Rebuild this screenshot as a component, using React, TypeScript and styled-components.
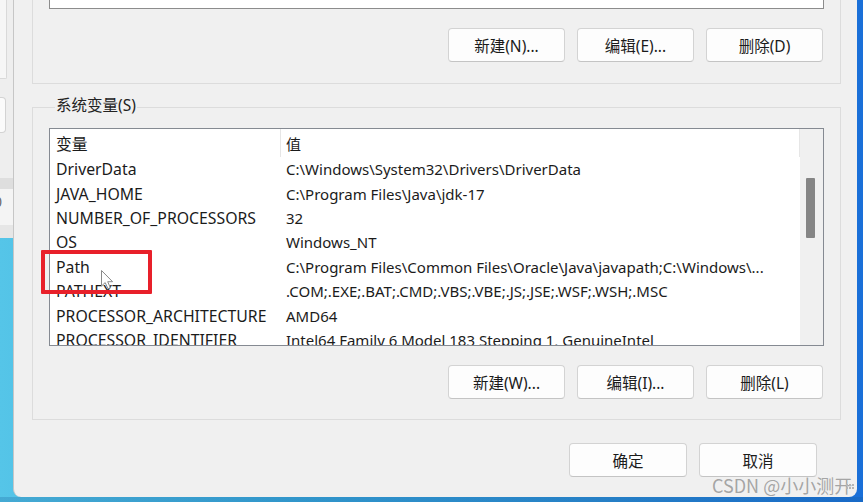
import React from 'react';
import styled, { createGlobalStyle } from 'styled-components';

/* ───────────── data ───────────── */

const systemVars: [string, string][] = [
  ['DriverData', 'C:\\Windows\\System32\\Drivers\\DriverData'],
  ['JAVA_HOME', 'C:\\Program Files\\Java\\jdk-17'],
  ['NUMBER_OF_PROCESSORS', '32'],
  ['OS', 'Windows_NT'],
  ['Path', 'C:\\Program Files\\Common Files\\Oracle\\Java\\javapath;C:\\Windows\\...'],
  ['PATHEXT', '.COM;.EXE;.BAT;.CMD;.VBS;.VBE;.JS;.JSE;.WSF;.WSH;.MSC'],
  ['PROCESSOR_ARCHITECTURE', 'AMD64'],
  ['PROCESSOR_IDENTIFIER', 'Intel64 Family 6 Model 183 Stepping 1, GenuineIntel'],
];

const GlobalStyle = createGlobalStyle`
  html, body { margin: 0; padding: 0; background: #1a6fd8; }
  body {
    font-family: 'Noto Sans', 'Noto Sans CJK SC', sans-serif;
    color: #1b1b1b;
  }
  * { box-sizing: border-box; }
`;

/* ───────────── component ───────────── */

const App: React.FC = () => (
  <>
    <GlobalStyle />
    <Desktop>
      {/* window peeking out behind the dialog */}
      <BehindPane>
        <BehindField />
        <BehindButton />
        <BehindBand />
        <BehindText>0</BehindText>
      </BehindPane>

      <Dialog>
        {/* user variables (scrolled off the top) */}
        <Group>
          <ListStub />
          <ButtonRow>
            <Button>新建(N)...</Button>
            <Button>编辑(E)...</Button>
            <Button>删除(D)</Button>
          </ButtonRow>
        </Group>

        {/* system variables */}
        <Group framed>
          <GroupTitle>系统变量(S)</GroupTitle>
          <ListBox>
            <Table>
              <HeaderRow>
                <NameCell header>变量</NameCell>
                <ValueCell>值</ValueCell>
              </HeaderRow>
              {systemVars.map(([name, value]) => (
                <Row key={name}>
                  <NameCell>{name}</NameCell>
                  <ValueCell>{value}</ValueCell>
                </Row>
              ))}
            </Table>
            <ScrollTrack>
              <ScrollThumb />
            </ScrollTrack>
          </ListBox>
          <ButtonRow>
            <Button>新建(W)...</Button>
            <Button>编辑(I)...</Button>
            <Button>删除(L)</Button>
          </ButtonRow>
        </Group>

        <Footer>
          <Button wide>确定</Button>
          <Button wide>取消</Button>
        </Footer>
      </Dialog>

      {/* annotations on top of the screenshot */}
      <Highlight />
      <Pointer width="16" height="22" viewBox="0 0 16 22">
        <path
          d="M1.5 1.5 L1.5 17 L5.2 13.6 L8 19.8 L10.4 18.8 L7.7 12.7 L12.6 12.7 Z"
          fill="rgba(255,255,255,0.75)"
          stroke="#8a8a8a"
          strokeWidth="1"
          strokeLinejoin="round"
        />
      </Pointer>
      <Watermark>CSDN @小小测开</Watermark>
      <Grip>
        {[0, 1, 2, 3, 4, 5].map((i) => (
          <GripDot key={i} />
        ))}
      </Grip>
    </Desktop>
  </>
);

export default App;

/* ───────────── styled components ───────────── */

const Desktop = styled.div`
  position: relative;
  width: 863px;
  height: 502px;
  overflow: hidden;
  display: flex;
  align-items: flex-start;
  background:
    linear-gradient(180deg, transparent 0 497px, rgba(20, 90, 150, 0.25) 497px),
    linear-gradient(90deg, #55c5e8 0%, #3aa9dc 35%, #2c8cd6 70%, #1a6fd8 100%);
`;

const BehindPane = styled.div`
  width: 13px;
  height: 238px;
  flex-shrink: 0;
  background: #eeeeee;
  display: flex;
  flex-direction: column;
`;

const BehindField = styled.div`
  width: 7px;
  height: 79px;
  background: #f6f6f6;
  border-right: 1px solid #d9d9d9;
  border-bottom: 1px solid #d9d9d9;
  border-bottom-right-radius: 2px;
`;

const BehindButton = styled.div`
  margin-top: 18px;
  width: 6px;
  height: 36px;
  background: #fbfbfb;
  border: 1px solid #d3d3d3;
  border-left: none;
  border-radius: 0 4px 4px 0;
`;

const BehindBand = styled.div`
  margin-top: 45px;
  height: 11px;
  background: #dedede;
`;

const BehindText = styled.div`
  flex: 1;
  margin-left: -6px;
  padding-top: 4px;
  font-size: 14px;
  line-height: 18px;
  color: #666;
  background: linear-gradient(180deg, #f4f4f4 0 36px, #e6e6e6 36px);
`;

const Dialog = styled.div`
  width: 844px;
  height: 497px;
  flex-shrink: 0;
  background: #f0f0f0;
  border-left: 1px solid #c6c6c6;
  border-radius: 0 0 8px 8px;
  padding: 0 16px 0 18px;
  display: flex;
  flex-direction: column;
`;

const Group = styled.div<{ framed?: boolean }>`
  display: flex;
  flex-direction: column;
  border: 1px solid #dcdcdc;
  border-top: ${({ framed }) => (framed ? '1px solid #dcdcdc' : 'none')};
  margin-top: ${({ framed }) => (framed ? '23px' : '0')};
  padding: 0 16px ${({ framed }) => (framed ? '20px' : '21px')} 16px;
`;

const GroupTitle = styled.div`
  align-self: flex-start;
  margin: -13px 0 0 6px;
  padding: 0 1px;
  background: #f0f0f0;
  font-size: 15.5px;
  line-height: 20px;
  color: #222;
`;

const ListStub = styled.div`
  height: 9px;
  background: #ffffff;
  border: 1px solid #8c8c8c;
  border-top: none;
`;

const ListBox = styled.div`
  margin-top: 13px;
  height: 218px;
  background: #ffffff;
  border: 1px solid #858a92;
  display: flex;
  overflow: hidden;
`;

const Table = styled.div`
  flex: 1;
  display: flex;
  flex-direction: column;
  font-size: 15px;
`;

const HeaderRow = styled.div`
  display: flex;
  flex-shrink: 0;
  height: 28px;
  align-items: center;
  border-right: 1px solid #e6e6e6;
`;

const Row = styled.div`
  display: flex;
  flex-shrink: 0;
  height: 24.4px;
  align-items: center;
  white-space: nowrap;
`;

const NameCell = styled.div<{ header?: boolean }>`
  width: 231px;
  flex-shrink: 0;
  padding-left: 6px;
  align-self: stretch;
  display: flex;
  align-items: center;
  font-size: 15.8px;
  border-right: ${({ header }) => (header ? '1px solid #e6e6e6' : '1px solid transparent')};
`;

const ValueCell = styled.div`
  flex: 1;
  padding-left: 5px;
  overflow: hidden;
`;

const ScrollTrack = styled.div`
  width: 23px;
  flex-shrink: 0;
  background: #f0f0f0;
  padding: 49px 0 0 6px;
`;

const ScrollThumb = styled.div`
  width: 9px;
  height: 60px;
  background: #858585;
  border-radius: 1px;
`;

const ButtonRow = styled.div`
  display: flex;
  justify-content: flex-end;
  gap: 12px;
  margin: 19px 1px 0 0;
`;

const Button = styled.button<{ wide?: boolean }>`
  width: ${({ wide }) => (wide ? '118px' : '117px')};
  height: 34px;
  background: #fdfdfd;
  border: 1px solid #d3d3d3;
  border-bottom-color: #c4c4c4;
  border-radius: 4px;
  font-family: inherit;
  font-size: 15.5px;
  color: #1b1b1b;
  padding: 0;
`;

const Footer = styled.div`
  display: flex;
  justify-content: flex-end;
  gap: 12px;
  margin: 23px 24px 0 0;
`;

const Highlight = styled.div`
  position: absolute;
  left: 41px;
  top: 250px;
  width: 111px;
  height: 44px;
  border: 4px solid #e8202a;
  border-radius: 1px;
`;

const Pointer = styled.svg`
  position: absolute;
  left: 100px;
  top: 269px;
`;

const Watermark = styled.div`
  position: absolute;
  left: 712px;
  top: 473px;
  font-family: 'Noto Sans CJK SC', sans-serif;
  font-size: 18px;
  line-height: 24px;
  color: rgba(145, 145, 145, 0.8);
  white-space: nowrap;
`;

const Grip = styled.div`
  position: absolute;
  left: 845px;
  top: 484px;
  width: 9px;
  display: flex;
  flex-wrap: wrap;
  justify-content: flex-end;
  gap: 1px;
`;

const GripDot = styled.span`
  width: 2px;
  height: 2px;
  background: #b5b5b5;
`;
